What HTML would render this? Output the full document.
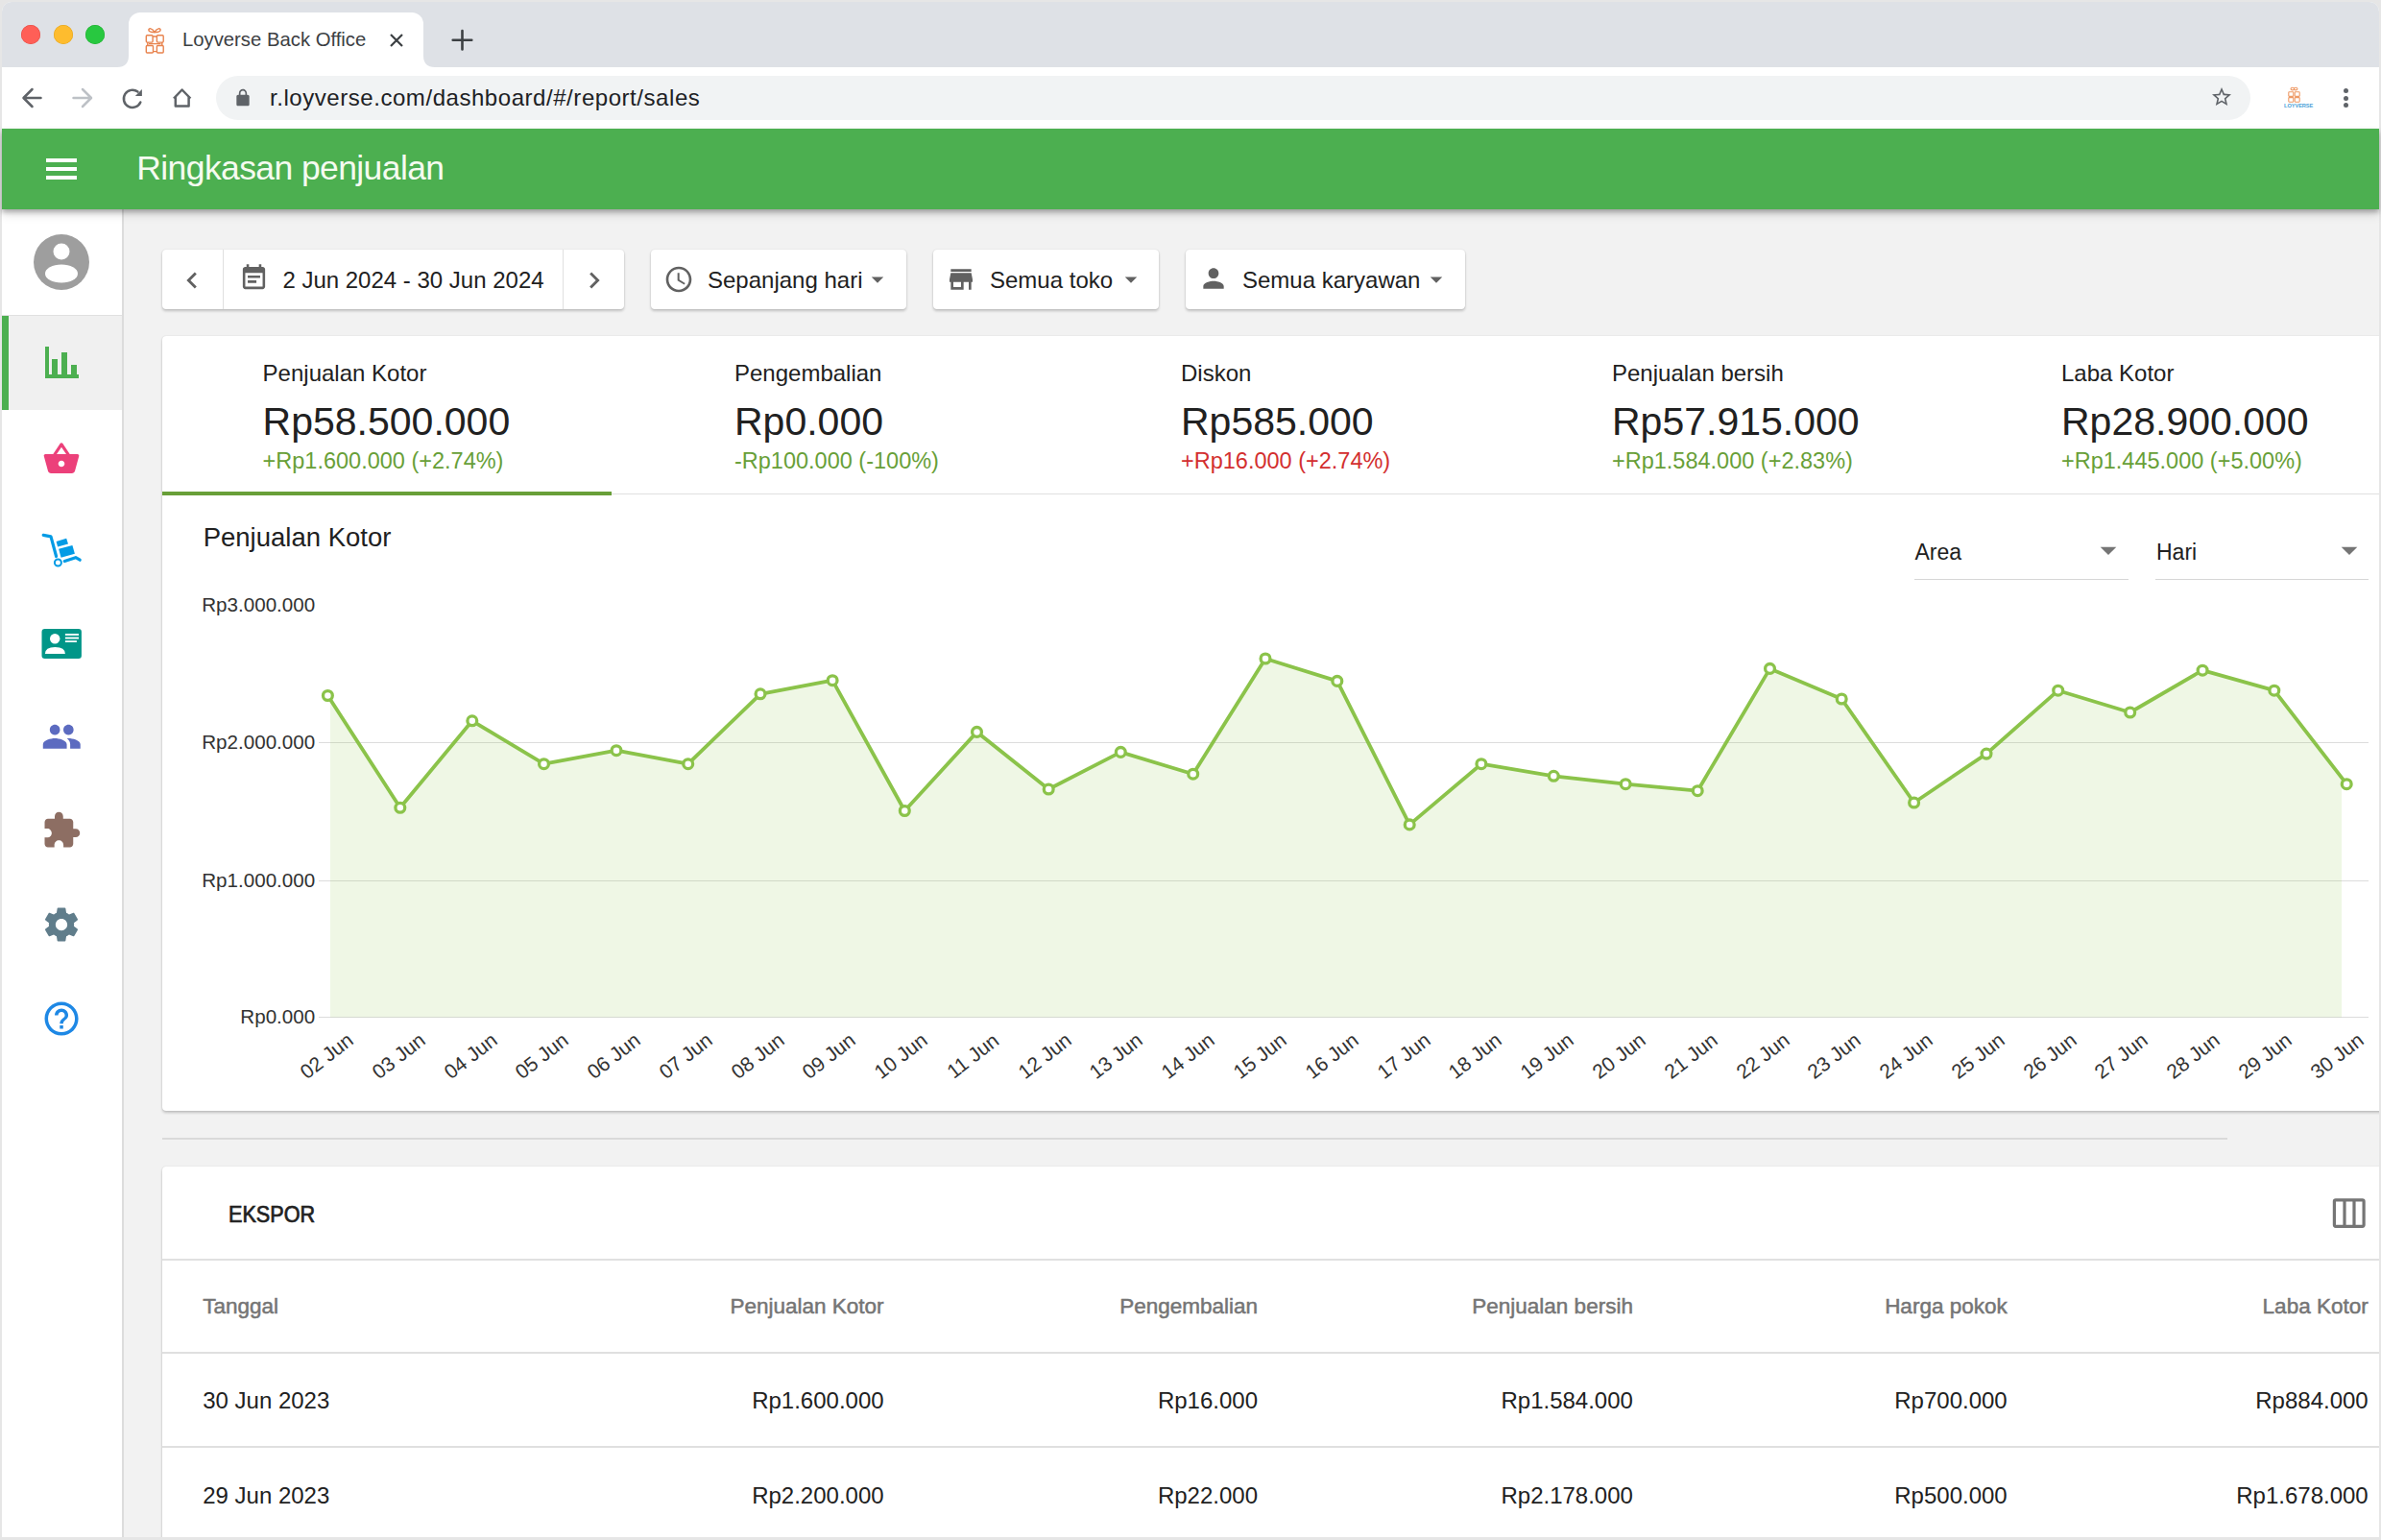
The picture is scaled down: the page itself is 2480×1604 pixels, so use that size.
<!DOCTYPE html>
<html><head><meta charset="utf-8"><title>Loyverse Back Office</title>
<style>
html,body{margin:0;padding:0;}
body{width:2480px;height:1604px;overflow:hidden;position:relative;background:#e6e6e6;font-family:"Liberation Sans", sans-serif;}
.t{position:absolute;white-space:nowrap;font-family:"Liberation Sans", sans-serif;}
</style></head><body>
<div style="position:absolute;left:0px;top:0px;width:2480px;height:1604px;background:#e6e6e6"></div>
<div style="position:absolute;left:2px;top:2px;width:2476px;height:1599px;background:#fff;border-radius:10px;overflow:hidden"></div>
<div style="position:absolute;left:2px;top:2px;width:2476px;height:68px;background:#dee1e6;border-radius:10px 10px 0 0"></div>
<div style="position:absolute;left:22px;top:26px;width:20px;height:20px;background:#ff5f57;border-radius:50%;box-shadow:inset 0 0 0 0.5px #e2463f"></div>
<div style="position:absolute;left:55.5px;top:26px;width:20px;height:20px;background:#febc2e;border-radius:50%;box-shadow:inset 0 0 0 0.5px #e1a116"></div>
<div style="position:absolute;left:89px;top:26px;width:20px;height:20px;background:#28c840;border-radius:50%;box-shadow:inset 0 0 0 0.5px #1aab29"></div>
<div style="position:absolute;left:134px;top:13px;width:307px;height:57px;background:#fff;border-radius:12px 12px 0 0"></div>
<svg style="position:absolute;left:122px;top:58px" width="12" height="12"><path d="M0 12 Q12 12 12 0 L12 12 Z" fill="#fff"/></svg>
<svg style="position:absolute;left:441px;top:58px" width="12" height="12"><path d="M12 12 Q0 12 0 0 L0 12 Z" fill="#fff"/></svg>
<svg style="position:absolute;left:145px;top:25px;" width="32" height="34" viewBox="0 0 32 34"><g fill="none" stroke="#e8834e" stroke-width="1.4"><path d="M16 8.6 C13.5 4.2 9.6 3.9 9.9 6.4 C10.1 8.2 12.8 8.6 16 8.6 C19.2 8.6 21.9 8.2 22.1 6.4 C22.4 3.9 18.5 4.2 16 8.6 Z"/><rect x="7.3" y="11.7" width="6.8" height="7.4" rx="1"/><rect x="18.4" y="11.7" width="6.8" height="7.4" rx="1"/><rect x="7.3" y="22.5" width="7.2" height="7.5" rx="1"/><rect x="18.4" y="22.5" width="6.8" height="7.5" rx="1"/><path d="M14.1 13 H18.4 M14.5 28.6 H18.4 M8.8 19 V22.5 M23.8 19 V22.5 M10 20.6 H22.5"/></g></svg>
<div class="t" style="left:190px;top:31.2px;font-size:20.3px;line-height:20.3px;color:#3c4043;font-weight:400;">Loyverse Back Office</div>
<svg style="position:absolute;left:404px;top:33px;" width="18" height="18" viewBox="0 0 18 18"><path d="M3 3 L15 15 M15 3 L3 15" stroke="#3c4043" stroke-width="2.2"/></svg>
<svg style="position:absolute;left:465px;top:26px" width="32" height="32" viewBox="465 26 32 32"><path d="M481.5 32 V51.5 M471.7 41.8 H491.3" stroke="#3c4043" stroke-width="2.6" stroke-linecap="round"/></svg>
<svg style="position:absolute;left:0;top:70px" width="220" height="64" viewBox="0 70 220 64"><g fill="none" stroke-linecap="round" stroke-linejoin="round" stroke-width="2.5"><path stroke="#5f6368" d="M42.5 102 H25 M33.5 93 L24.5 102 L33.5 111"/><path stroke="#bdc1c6" d="M76.5 102 H94.5 M86 93 L95 102 L86 111"/><path stroke="#5f6368" d="M146.3 106.5 A9.1 9.1 0 1 1 143.5 95.6"/><path stroke="#5f6368" stroke-linecap="butt" d="M181 102.5 L189.6 93.5 L198.4 102.5 M182.8 100.5 V110.6 H196.6 V100.5"/></g><path fill="#5f6368" d="M147.9 93 V100 H140.9 Z"/></svg>
<div style="position:absolute;left:225px;top:79px;width:2119px;height:46px;background:#f1f3f4;border-radius:23px"></div>
<svg style="position:absolute;left:243.2px;top:92.4px;" width="20" height="20" viewBox="0 0 24 24"><path fill="#5f6368" d="M18 8h-1V6c0-2.76-2.24-5-5-5S7 3.24 7 6v2H6c-1.1 0-2 .9-2 2v10c0 1.1.9 2 2 2h12c1.1 0 2-.9 2-2V10c0-1.1-.9-2-2-2zM9 6c0-1.66 1.34-3 3-3s3 1.34 3 3v2H9V6z"/></svg>
<div class="t" style="left:281px;top:90.4px;font-size:24px;line-height:24px;color:#202124;font-weight:400;letter-spacing:0.55px">r.loyverse.com/dashboard/#/report/sales</div>
<svg style="position:absolute;left:2302px;top:89px;" width="24" height="24" viewBox="0 0 24 24"><path fill="#5f6368" d="M22 9.24l-7.19-.62L12 2 9.19 8.63 2 9.24l5.46 4.73L5.82 21 12 17.27 18.18 21l-1.63-7.03L22 9.24zM12 15.4l-3.76 2.27 1-4.28-3.32-2.88 4.38-.38L12 6.1l1.71 4.04 4.38.38-3.32 2.88 1 4.28L12 15.4z"/></svg>
<svg style="position:absolute;left:2382px;top:89.5px;" width="15" height="17" viewBox="0 0 15 17"><g fill="none" stroke="#ee9a66" stroke-width="1.1"><ellipse cx="5.8" cy="2.6" rx="1.8" ry="1.3"/><ellipse cx="9.2" cy="2.6" rx="1.8" ry="1.3"/><rect x="1.8" y="5.8" width="5" height="4.6" rx=".6"/><rect x="8.2" y="5.8" width="5" height="4.6" rx=".6"/><rect x="1.8" y="11.6" width="5" height="4.6" rx=".6"/><rect x="8.2" y="11.6" width="5" height="4.6" rx=".6"/></g></svg>
<div class="t" style="left:2378.5px;top:107.3px;font-size:6px;line-height:6px;font-weight:700;color:#4a9fd8;letter-spacing:-0.1px;transform:scaleX(0.95);transform-origin:left">LOYVERSE</div>
<div style="position:absolute;left:2440.5px;top:92.0px;width:5px;height:5px;background:#5f6368;border-radius:50%"></div>
<div style="position:absolute;left:2440.5px;top:99.5px;width:5px;height:5px;background:#5f6368;border-radius:50%"></div>
<div style="position:absolute;left:2440.5px;top:107.1px;width:5px;height:5px;background:#5f6368;border-radius:50%"></div>
<div style="position:absolute;left:2px;top:134px;width:2476px;height:84px;background:#4caf50;box-shadow:0 3px 5px rgba(0,0,0,.28),0 6px 10px rgba(0,0,0,.1);z-index:2"></div>
<div style="position:absolute;left:48px;top:165px;width:32px;height:4.2px;background:#fff;z-index:3"></div>
<div style="position:absolute;left:48px;top:173.7px;width:32px;height:4.2px;background:#fff;z-index:3"></div>
<div style="position:absolute;left:48px;top:182.5px;width:32px;height:4.2px;background:#fff;z-index:3"></div>
<div class="t" style="left:142.3px;top:158.2px;font-size:35.5px;line-height:35.5px;color:#f5fbf0;font-weight:400;z-index:3;letter-spacing:-0.6px">Ringkasan penjualan</div>
<div style="position:absolute;left:2px;top:218px;width:125px;height:1384px;background:#fff;border-right:2px solid #dcdcdc"></div>
<div style="position:absolute;left:129px;top:218px;width:2349px;height:1383px;background:#f2f2f2"></div>
<svg style="position:absolute;left:35px;top:244px;" width="58" height="58" viewBox="0 0 58 58"><circle cx="29" cy="29" r="29" fill="#9e9e9e"/><circle cx="29" cy="18" r="8.5" fill="#fff"/><ellipse cx="29" cy="41" rx="17" ry="9.5" fill="#fff"/></svg>
<div style="position:absolute;left:2px;top:327.5px;width:125px;height:1.5px;background:#e0e0e0"></div>
<div style="position:absolute;left:2px;top:329px;width:125px;height:98px;background:#f0f0f0"></div>
<div style="position:absolute;left:2px;top:329px;width:6.5px;height:98px;background:#4caf50"></div>
<svg style="position:absolute;left:46px;top:361px;" width="36" height="34" viewBox="0 0 36 34"><g fill="#4caf50"><rect x="1" y="0" width="4" height="33"/><rect x="1" y="29" width="35" height="4"/><rect x="8" y="13" width="6" height="18"/><rect x="18" y="6" width="6" height="25"/><rect x="28" y="19" width="6" height="12"/></g></svg>
<svg style="position:absolute;left:44px;top:457.5px;" width="40" height="40" viewBox="0 0 24 24"><path fill="#ec407a" d="M17.21 9l-4.38-6.56c-.19-.28-.51-.42-.83-.42-.32 0-.64.14-.83.43L6.79 9H2c-.55 0-1 .45-1 1 0 .09.01.18.04.27l2.54 9.27c.23.84 1 1.46 1.92 1.46h13c.92 0 1.69-.62 1.93-1.46l2.54-9.27L23 10c0-.55-.45-1-1-1h-4.79zM9 9l3-4.4L15 9H9zm3 8c-1.1 0-2-.9-2-2s.9-2 2-2 2 .9 2 2-.9 2-2 2z"/></svg>
<svg style="position:absolute;left:38px;top:548px;" width="52" height="48" viewBox="0 0 52 48"><g fill="#039be5"><path d="M7.2 9.4 L15 10.9 L20.6 31.5" fill="none" stroke="#039be5" stroke-width="3.2" stroke-linecap="round" stroke-linejoin="round"/><polygon points="20.6,15.9 31.2,12.8 33,18.4 22.1,21.5"/><polygon points="23.1,23.7 37.4,20 39.9,28.7 25.6,32.7"/><circle cx="22.4" cy="38" r="3.5" fill="none" stroke="#039be5" stroke-width="2"/><path d="M29.3 36.5 L40.8 32.7 L45.2 35.2" fill="none" stroke="#039be5" stroke-width="3.2" stroke-linecap="round" stroke-linejoin="round"/></g></svg>
<svg style="position:absolute;left:38px;top:648px;" width="52" height="48" viewBox="0 0 52 48"><rect x="5.5" y="6.9" width="41.4" height="31" rx="3.2" fill="#009688"/><circle cx="19.2" cy="17.3" r="5.2" fill="#fff"/><path d="M8.9 33 Q8.9 25.9 19.4 25.9 Q29.9 25.9 29.9 33 Z" fill="#fff"/><rect x="29.9" y="12" width="14.1" height="1.9" fill="#fff"/><rect x="29.9" y="15.6" width="14.1" height="1.9" fill="#fff"/><rect x="29.9" y="19.2" width="12" height="1.8" fill="#fff"/></svg>
<svg style="position:absolute;left:42.9px;top:746.1px;" width="42.5" height="42.5" viewBox="0 0 24 24"><path fill="#5c6bc0" d="M16 11c1.66 0 2.99-1.34 2.99-3S17.66 5 16 5c-1.66 0-3 1.34-3 3s1.34 3 3 3zm-8 0c1.66 0 2.99-1.34 2.99-3S9.66 5 8 5C6.34 5 5 6.34 5 8s1.34 3 3 3zm0 2c-2.33 0-7 1.17-7 3.5V19h14v-2.5c0-2.33-4.67-3.5-7-3.5zm8 0c-.29 0-.62.02-.97.05 1.16.84 1.97 1.97 1.97 3.45V19h6v-2.5c0-2.33-4.67-3.5-7-3.5z"/></svg>
<svg style="position:absolute;left:43px;top:844px;" width="42" height="42" viewBox="0 0 24 24"><path fill="#8d6e63" d="M20.5 11H19V7c0-1.1-.9-2-2-2h-4V3.5C13 2.12 11.88 1 10.5 1S8 2.12 8 3.5V5H4c-1.1 0-1.99.9-1.99 2v3.8H3.5c1.49 0 2.7 1.21 2.7 2.7s-1.21 2.7-2.7 2.7H2V20c0 1.1.9 2 2 2h3.8v-1.5c0-1.49 1.21-2.7 2.7-2.7 1.49 0 2.7 1.21 2.7 2.7V22H17c1.1 0 2-.9 2-2v-4h1.5c1.38 0 2.5-1.12 2.5-2.5S21.88 11 20.5 11z"/></svg>
<svg style="position:absolute;left:43px;top:942px;" width="42" height="42" viewBox="0 0 24 24"><path fill="#607d8b" d="M19.43 12.98c.04-.32.07-.64.07-.98s-.03-.66-.07-.98l2.11-1.65c.19-.15.24-.42.12-.64l-2-3.46c-.12-.22-.39-.3-.61-.22l-2.49 1c-.52-.4-1.08-.73-1.69-.98l-.38-2.65C14.46 2.18 14.25 2 14 2h-4c-.25 0-.46.18-.49.42l-.38 2.650c-.61.25-1.17.59-1.69.98l-2.49-1c-.23-.09-.49 0-.61.22l-2 3.46c-.13.22-.07.49.12.64l2.11 1.65c-.04.32-.07.65-.07.98s.03.66.07.98l-2.11 1.65c-.19.15-.24.42-.12.64l2 3.46c.12.22.39.3.61.22l2.49-1c.52.4 1.08.73 1.69.98l.38 2.65c.03.24.24.42.49.42h4c.25 0 .46-.18.49-.42l.38-2.65c.61-.25 1.17-.59 1.69-.98l2.49 1c.23.09.49 0 .61-.22l2-3.46c.12-.22.07-.49-.12-.64l-2.11-1.65zM12 15.5c-1.93 0-3.5-1.57-3.5-3.5s1.57-3.5 3.5-3.5 3.5 1.57 3.5 3.5-1.57 3.5-3.5 3.5z"/></svg>
<svg style="position:absolute;left:43.3px;top:1039.5px;" width="42.1" height="42.1" viewBox="0 0 24 24"><path fill="#1e88e5" d="M11 18h2v-2h-2v2zm1-16C6.48 2 2 6.48 2 12s4.48 10 10 10 10-4.48 10-10S17.52 2 12 2zm0 18c-4.41 0-8-3.59-8-8s3.59-8 8-8 8 3.59 8 8-3.59 8-8 8zm0-14c-2.21 0-4 1.79-4 4h2c0-1.1.9-2 2-2s2 .9 2 2c0 2-3 1.75-3 5h2c0-2.25 3-2.5 3-5 0-2.21-1.79-4-4-4z"/></svg>
<div style="position:absolute;left:168.5px;top:259.5px;width:481px;height:62.3px;background:#fff;border-radius:4px;box-shadow:0 2px 3px rgba(0,0,0,.2),0 0 1.5px rgba(0,0,0,.14)"></div>
<div style="position:absolute;left:231.5px;top:259.5px;width:1.5px;height:62.3px;background:#e0e0e0"></div>
<div style="position:absolute;left:585.5px;top:259.5px;width:1.5px;height:62.3px;background:#e0e0e0"></div>
<svg style="position:absolute;left:183px;top:275px;" width="34" height="34" viewBox="0 0 24 24"><path fill="#616161" d="M15.41 7.41L14 6l-6 6 6 6 1.41-1.41L10.83 12z"/></svg>
<svg style="position:absolute;left:602px;top:275px;" width="34" height="34" viewBox="0 0 24 24"><path fill="#616161" d="M10 6L8.59 7.41 13.17 12l-4.58 4.59L10 18l6-6z"/></svg>
<svg style="position:absolute;left:249px;top:274px;" width="31" height="31" viewBox="0 0 24 24"><path fill="#616161" d="M17 10H7v2h10v-2zm2-7h-1V1h-2v2H8V1H6v2H5c-1.11 0-1.99.9-1.99 2L3 19c0 1.1.89 2 2 2h14c1.1 0 2-.9 2-2V5c0-1.1-.9-2-2-2zm0 16H5V8h14v11zm-5-5H7v2h7v-2z"/></svg>
<div class="t" style="left:294.4px;top:279.8px;font-size:24px;line-height:24px;color:#212121;font-weight:400;">2 Jun 2024 - 30 Jun 2024</div>
<div style="position:absolute;left:677.5px;top:259.5px;width:266.5px;height:62.3px;background:#fff;border-radius:4px;box-shadow:0 2px 3px rgba(0,0,0,.2),0 0 1.5px rgba(0,0,0,.14)"></div>
<svg style="position:absolute;left:691px;top:275px;" width="32" height="32" viewBox="0 0 24 24"><path fill="#616161" d="M11.99 2C6.47 2 2 6.48 2 12s4.47 10 9.99 10C17.52 22 22 17.52 22 12S17.52 2 11.99 2zM12 20c-4.42 0-8-3.58-8-8s3.58-8 8-8 8 3.58 8 8-3.58 8-8 8zm.5-13H11v6l5.25 3.15.75-1.23-4.5-2.67z"/></svg>
<div class="t" style="left:737px;top:279.8px;font-size:24px;line-height:24px;color:#212121;font-weight:400;">Sepanjang hari</div>
<svg style="position:absolute;left:899px;top:275.9px;" width="30" height="30" viewBox="0 0 24 24"><path fill="#616161" d="M7 10l5 5 5-5z"/></svg>
<div style="position:absolute;left:971.5px;top:259.5px;width:235.5px;height:62.3px;background:#fff;border-radius:4px;box-shadow:0 2px 3px rgba(0,0,0,.2),0 0 1.5px rgba(0,0,0,.14)"></div>
<svg style="position:absolute;left:985px;top:275px;" width="32" height="32" viewBox="0 0 24 24"><path fill="#616161" d="M20 4H4v2h16V4zm1 10v-2l-1-5H4l-1 5v2h1v6h10v-6h4v6h2v-6h1zm-9 4H6v-4h6v4z"/></svg>
<div class="t" style="left:1031px;top:279.8px;font-size:24px;line-height:24px;color:#212121;font-weight:400;">Semua toko</div>
<svg style="position:absolute;left:1162.5px;top:275.9px;" width="30" height="30" viewBox="0 0 24 24"><path fill="#616161" d="M7 10l5 5 5-5z"/></svg>
<div style="position:absolute;left:1235px;top:259.5px;width:291px;height:62.3px;background:#fff;border-radius:4px;box-shadow:0 2px 3px rgba(0,0,0,.2),0 0 1.5px rgba(0,0,0,.14)"></div>
<svg style="position:absolute;left:1248px;top:274px;" width="32" height="32" viewBox="0 0 24 24"><path fill="#616161" d="M12 12c2.21 0 4-1.79 4-4s-1.79-4-4-4-4 1.79-4 4 1.79 4 4 4zm0 2c-2.67 0-8 1.34-8 4v2h16v-2c0-2.66-5.33-4-8-4z"/></svg>
<div class="t" style="left:1294px;top:279.8px;font-size:24px;line-height:24px;color:#212121;font-weight:400;">Semua karyawan</div>
<svg style="position:absolute;left:1480.5px;top:275.9px;" width="30" height="30" viewBox="0 0 24 24"><path fill="#616161" d="M7 10l5 5 5-5z"/></svg>
<div style="position:absolute;left:168.5px;top:349.6px;width:2340px;height:807.6px;background:#fff;border-radius:4px;box-shadow:0 2px 3px rgba(0,0,0,.2),0 0 1.5px rgba(0,0,0,.14)"></div>
<div class="t" style="left:273.6px;top:376.6px;font-size:24px;line-height:24px;color:#212121;font-weight:400;">Penjualan Kotor</div>
<div class="t" style="left:273.6px;top:418.9px;font-size:41px;line-height:41px;color:#212121;font-weight:400;">Rp58.500.000</div>
<div class="t" style="left:273.6px;top:469.2px;font-size:23.5px;line-height:23.5px;color:#689f38;font-weight:400;">+Rp1.600.000 (+2.74%)</div>
<div class="t" style="left:765px;top:376.6px;font-size:24px;line-height:24px;color:#212121;font-weight:400;">Pengembalian</div>
<div class="t" style="left:765px;top:418.9px;font-size:41px;line-height:41px;color:#212121;font-weight:400;">Rp0.000</div>
<div class="t" style="left:765px;top:469.2px;font-size:23.5px;line-height:23.5px;color:#689f38;font-weight:400;">-Rp100.000 (-100%)</div>
<div class="t" style="left:1230px;top:376.6px;font-size:24px;line-height:24px;color:#212121;font-weight:400;">Diskon</div>
<div class="t" style="left:1230px;top:418.9px;font-size:41px;line-height:41px;color:#212121;font-weight:400;">Rp585.000</div>
<div class="t" style="left:1230px;top:469.2px;font-size:23.5px;line-height:23.5px;color:#d32f2f;font-weight:400;">+Rp16.000 (+2.74%)</div>
<div class="t" style="left:1679px;top:376.6px;font-size:24px;line-height:24px;color:#212121;font-weight:400;">Penjualan bersih</div>
<div class="t" style="left:1679px;top:418.9px;font-size:41px;line-height:41px;color:#212121;font-weight:400;">Rp57.915.000</div>
<div class="t" style="left:1679px;top:469.2px;font-size:23.5px;line-height:23.5px;color:#689f38;font-weight:400;">+Rp1.584.000 (+2.83%)</div>
<div class="t" style="left:2147px;top:376.6px;font-size:24px;line-height:24px;color:#212121;font-weight:400;">Laba Kotor</div>
<div class="t" style="left:2147px;top:418.9px;font-size:41px;line-height:41px;color:#212121;font-weight:400;">Rp28.900.000</div>
<div class="t" style="left:2147px;top:469.2px;font-size:23.5px;line-height:23.5px;color:#689f38;font-weight:400;">+Rp1.445.000 (+5.00%)</div>
<div style="position:absolute;left:168.5px;top:513.5px;width:2340px;height:1.5px;background:#e0e0e0"></div>
<div style="position:absolute;left:168.5px;top:511.5px;width:468.5px;height:4px;background:#689f38"></div>
<div class="t" style="left:211.7px;top:545.7px;font-size:27.5px;line-height:27.5px;color:#212121;font-weight:400;">Penjualan Kotor</div>
<div class="t" style="left:1994.5px;top:563.5px;font-size:23px;line-height:23px;color:#212121;font-weight:400;">Area</div>
<div style="position:absolute;left:1994px;top:602.5px;width:223px;height:1.5px;background:#d6d6d6"></div>
<svg style="position:absolute;left:2176.3px;top:552.9px;" width="40" height="40" viewBox="0 0 24 24"><path fill="#757575" d="M7 10l5 5 5-5z"/></svg>
<div class="t" style="left:2246px;top:563.5px;font-size:23px;line-height:23px;color:#212121;font-weight:400;">Hari</div>
<div style="position:absolute;left:2245px;top:602.5px;width:222px;height:1.5px;background:#d6d6d6"></div>
<svg style="position:absolute;left:2426.8px;top:552.9px;" width="40" height="40" viewBox="0 0 24 24"><path fill="#757575" d="M7 10l5 5 5-5z"/></svg>
<div class="t" style="right:2151.8px;top:620.4px;font-size:20.6px;line-height:20.6px;color:#333;font-weight:400;">Rp3.000.000</div>
<div class="t" style="right:2151.8px;top:763.4px;font-size:20.6px;line-height:20.6px;color:#333;font-weight:400;">Rp2.000.000</div>
<div class="t" style="right:2151.8px;top:907.2px;font-size:20.6px;line-height:20.6px;color:#333;font-weight:400;">Rp1.000.000</div>
<div class="t" style="right:2151.8px;top:1049.3px;font-size:20.6px;line-height:20.6px;color:#333;font-weight:400;">Rp0.000</div>
<div style="position:absolute;left:332px;top:772.85px;width:2135px;height:1.5px;background:#dcdcdc"></div>
<div style="position:absolute;left:332px;top:916.65px;width:2135px;height:1.5px;background:#dcdcdc"></div>
<div style="position:absolute;left:332px;top:1058.75px;width:2135px;height:1.5px;background:#dcdcdc"></div>
<svg style="position:absolute;left:0;top:0" width="2480" height="1604" viewBox="0 0 2480 1604"><polygon fill="#8bc34a" fill-opacity="0.14" points="344.0,1059.5 344.0,728.5 416.8,841.3 491.8,750.8 566.5,795.7 642.0,781.7 716.7,795.7 792.0,722.8 867.1,708.7 942.3,844.5 1017.5,762.4 1092.2,822.0 1167.3,783.4 1242.7,806.2 1318.0,686.0 1392.8,709.4 1468.2,858.9 1542.9,795.7 1618.3,808.3 1693.2,816.7 1768.2,823.7 1843.5,696.4 1918.2,728.0 1993.6,836.0 2069.0,785.1 2143.7,719.2 2218.7,742.0 2294.1,698.2 2368.8,719.2 2439.0,810.0 2439.0,1059.5"/><polyline fill="none" stroke="#8bc34a" stroke-width="3.8" stroke-linejoin="round" points="341.4,724.5 416.8,841.3 491.8,750.8 566.5,795.7 642.0,781.7 716.7,795.7 792.0,722.8 867.1,708.7 942.3,844.5 1017.5,762.4 1092.2,822.0 1167.3,783.4 1242.7,806.2 1318.0,686.0 1392.8,709.4 1468.2,858.9 1542.9,795.7 1618.3,808.3 1693.2,816.7 1768.2,823.7 1843.5,696.4 1918.2,728.0 1993.6,836.0 2069.0,785.1 2143.7,719.2 2218.7,742.0 2294.1,698.2 2368.8,719.2 2444.2,816.7"/><circle cx="341.4" cy="724.5" r="4.9" fill="#fff" stroke="#8bc34a" stroke-width="3.3"/><circle cx="416.8" cy="841.3" r="4.9" fill="#fff" stroke="#8bc34a" stroke-width="3.3"/><circle cx="491.8" cy="750.8" r="4.9" fill="#fff" stroke="#8bc34a" stroke-width="3.3"/><circle cx="566.5" cy="795.7" r="4.9" fill="#fff" stroke="#8bc34a" stroke-width="3.3"/><circle cx="642.0" cy="781.7" r="4.9" fill="#fff" stroke="#8bc34a" stroke-width="3.3"/><circle cx="716.7" cy="795.7" r="4.9" fill="#fff" stroke="#8bc34a" stroke-width="3.3"/><circle cx="792.0" cy="722.8" r="4.9" fill="#fff" stroke="#8bc34a" stroke-width="3.3"/><circle cx="867.1" cy="708.7" r="4.9" fill="#fff" stroke="#8bc34a" stroke-width="3.3"/><circle cx="942.3" cy="844.5" r="4.9" fill="#fff" stroke="#8bc34a" stroke-width="3.3"/><circle cx="1017.5" cy="762.4" r="4.9" fill="#fff" stroke="#8bc34a" stroke-width="3.3"/><circle cx="1092.2" cy="822.0" r="4.9" fill="#fff" stroke="#8bc34a" stroke-width="3.3"/><circle cx="1167.3" cy="783.4" r="4.9" fill="#fff" stroke="#8bc34a" stroke-width="3.3"/><circle cx="1242.7" cy="806.2" r="4.9" fill="#fff" stroke="#8bc34a" stroke-width="3.3"/><circle cx="1318.0" cy="686.0" r="4.9" fill="#fff" stroke="#8bc34a" stroke-width="3.3"/><circle cx="1392.8" cy="709.4" r="4.9" fill="#fff" stroke="#8bc34a" stroke-width="3.3"/><circle cx="1468.2" cy="858.9" r="4.9" fill="#fff" stroke="#8bc34a" stroke-width="3.3"/><circle cx="1542.9" cy="795.7" r="4.9" fill="#fff" stroke="#8bc34a" stroke-width="3.3"/><circle cx="1618.3" cy="808.3" r="4.9" fill="#fff" stroke="#8bc34a" stroke-width="3.3"/><circle cx="1693.2" cy="816.7" r="4.9" fill="#fff" stroke="#8bc34a" stroke-width="3.3"/><circle cx="1768.2" cy="823.7" r="4.9" fill="#fff" stroke="#8bc34a" stroke-width="3.3"/><circle cx="1843.5" cy="696.4" r="4.9" fill="#fff" stroke="#8bc34a" stroke-width="3.3"/><circle cx="1918.2" cy="728.0" r="4.9" fill="#fff" stroke="#8bc34a" stroke-width="3.3"/><circle cx="1993.6" cy="836.0" r="4.9" fill="#fff" stroke="#8bc34a" stroke-width="3.3"/><circle cx="2069.0" cy="785.1" r="4.9" fill="#fff" stroke="#8bc34a" stroke-width="3.3"/><circle cx="2143.7" cy="719.2" r="4.9" fill="#fff" stroke="#8bc34a" stroke-width="3.3"/><circle cx="2218.7" cy="742.0" r="4.9" fill="#fff" stroke="#8bc34a" stroke-width="3.3"/><circle cx="2294.1" cy="698.2" r="4.9" fill="#fff" stroke="#8bc34a" stroke-width="3.3"/><circle cx="2368.8" cy="719.2" r="4.9" fill="#fff" stroke="#8bc34a" stroke-width="3.3"/><circle cx="2444.2" cy="816.7" r="4.9" fill="#fff" stroke="#8bc34a" stroke-width="3.3"/></svg>
<div class="t" style="left:299.8px;top:1088.5px;width:80px;text-align:center;font-size:21px;line-height:21px;color:#333;transform:rotate(-38deg)">02 Jun</div>
<div class="t" style="left:374.9px;top:1088.5px;width:80px;text-align:center;font-size:21px;line-height:21px;color:#333;transform:rotate(-38deg)">03 Jun</div>
<div class="t" style="left:449.6px;top:1088.5px;width:80px;text-align:center;font-size:21px;line-height:21px;color:#333;transform:rotate(-38deg)">04 Jun</div>
<div class="t" style="left:524.0px;top:1088.5px;width:80px;text-align:center;font-size:21px;line-height:21px;color:#333;transform:rotate(-38deg)">05 Jun</div>
<div class="t" style="left:599.2px;top:1088.5px;width:80px;text-align:center;font-size:21px;line-height:21px;color:#333;transform:rotate(-38deg)">06 Jun</div>
<div class="t" style="left:673.6px;top:1088.5px;width:80px;text-align:center;font-size:21px;line-height:21px;color:#333;transform:rotate(-38deg)">07 Jun</div>
<div class="t" style="left:748.5px;top:1088.5px;width:80px;text-align:center;font-size:21px;line-height:21px;color:#333;transform:rotate(-38deg)">08 Jun</div>
<div class="t" style="left:823.3px;top:1088.5px;width:80px;text-align:center;font-size:21px;line-height:21px;color:#333;transform:rotate(-38deg)">09 Jun</div>
<div class="t" style="left:898.2px;top:1088.5px;width:80px;text-align:center;font-size:21px;line-height:21px;color:#333;transform:rotate(-38deg)">10 Jun</div>
<div class="t" style="left:973.1px;top:1088.5px;width:80px;text-align:center;font-size:21px;line-height:21px;color:#333;transform:rotate(-38deg)">11 Jun</div>
<div class="t" style="left:1047.5px;top:1088.5px;width:80px;text-align:center;font-size:21px;line-height:21px;color:#333;transform:rotate(-38deg)">12 Jun</div>
<div class="t" style="left:1122.3px;top:1088.5px;width:80px;text-align:center;font-size:21px;line-height:21px;color:#333;transform:rotate(-38deg)">13 Jun</div>
<div class="t" style="left:1197.4px;top:1088.5px;width:80px;text-align:center;font-size:21px;line-height:21px;color:#333;transform:rotate(-38deg)">14 Jun</div>
<div class="t" style="left:1272.4px;top:1088.5px;width:80px;text-align:center;font-size:21px;line-height:21px;color:#333;transform:rotate(-38deg)">15 Jun</div>
<div class="t" style="left:1346.9px;top:1088.5px;width:80px;text-align:center;font-size:21px;line-height:21px;color:#333;transform:rotate(-38deg)">16 Jun</div>
<div class="t" style="left:1422.0px;top:1088.5px;width:80px;text-align:center;font-size:21px;line-height:21px;color:#333;transform:rotate(-38deg)">17 Jun</div>
<div class="t" style="left:1496.3px;top:1088.5px;width:80px;text-align:center;font-size:21px;line-height:21px;color:#333;transform:rotate(-38deg)">18 Jun</div>
<div class="t" style="left:1571.4px;top:1088.5px;width:80px;text-align:center;font-size:21px;line-height:21px;color:#333;transform:rotate(-38deg)">19 Jun</div>
<div class="t" style="left:1646.0px;top:1088.5px;width:80px;text-align:center;font-size:21px;line-height:21px;color:#333;transform:rotate(-38deg)">20 Jun</div>
<div class="t" style="left:1720.7px;top:1088.5px;width:80px;text-align:center;font-size:21px;line-height:21px;color:#333;transform:rotate(-38deg)">21 Jun</div>
<div class="t" style="left:1795.7px;top:1088.5px;width:80px;text-align:center;font-size:21px;line-height:21px;color:#333;transform:rotate(-38deg)">22 Jun</div>
<div class="t" style="left:1870.1px;top:1088.5px;width:80px;text-align:center;font-size:21px;line-height:21px;color:#333;transform:rotate(-38deg)">23 Jun</div>
<div class="t" style="left:1945.2px;top:1088.5px;width:80px;text-align:center;font-size:21px;line-height:21px;color:#333;transform:rotate(-38deg)">24 Jun</div>
<div class="t" style="left:2020.3px;top:1088.5px;width:80px;text-align:center;font-size:21px;line-height:21px;color:#333;transform:rotate(-38deg)">25 Jun</div>
<div class="t" style="left:2094.7px;top:1088.5px;width:80px;text-align:center;font-size:21px;line-height:21px;color:#333;transform:rotate(-38deg)">26 Jun</div>
<div class="t" style="left:2169.3px;top:1088.5px;width:80px;text-align:center;font-size:21px;line-height:21px;color:#333;transform:rotate(-38deg)">27 Jun</div>
<div class="t" style="left:2244.4px;top:1088.5px;width:80px;text-align:center;font-size:21px;line-height:21px;color:#333;transform:rotate(-38deg)">28 Jun</div>
<div class="t" style="left:2318.8px;top:1088.5px;width:80px;text-align:center;font-size:21px;line-height:21px;color:#333;transform:rotate(-38deg)">29 Jun</div>
<div class="t" style="left:2393.9px;top:1088.5px;width:80px;text-align:center;font-size:21px;line-height:21px;color:#333;transform:rotate(-38deg)">30 Jun</div>
<div style="position:absolute;left:169px;top:1185px;width:2151px;height:2px;background:#dadada"></div>
<div style="position:absolute;left:168.5px;top:1214.5px;width:2340px;height:500px;background:#fff;border-radius:4px;box-shadow:0 2px 3px rgba(0,0,0,.2),0 0 1.5px rgba(0,0,0,.14)"></div>
<div class="t" style="left:238.4px;top:1253.8px;font-size:23.5px;line-height:23.5px;color:#212121;font-weight:400;-webkit-text-stroke:0.7px #212121;transform:scaleX(0.92);transform-origin:left">EKSPOR</div>
<svg style="position:absolute;left:2426px;top:1245px" width="42" height="38" viewBox="2426 1245 42 38"><g fill="none" stroke="#757575" stroke-width="3.2"><rect x="2431.4" y="1249.8" width="30.7" height="27.5" rx="1.5"/><path d="M2442 1250 V1277 M2452 1250 V1277"/></g></svg>
<div style="position:absolute;left:168.5px;top:1310.5px;width:2340px;height:2px;background:#e0e0e0"></div>
<div class="t" style="left:211.2px;top:1350.4px;font-size:22.5px;line-height:22.5px;color:#757575;font-weight:400;-webkit-text-stroke:0.5px #757575">Tanggal</div>
<div class="t" style="right:1559.4px;top:1350.4px;font-size:22.5px;line-height:22.5px;color:#757575;font-weight:400;-webkit-text-stroke:0.5px #757575">Penjualan Kotor</div>
<div class="t" style="right:1170px;top:1350.4px;font-size:22.5px;line-height:22.5px;color:#757575;font-weight:400;-webkit-text-stroke:0.5px #757575">Pengembalian</div>
<div class="t" style="right:779.0999999999999px;top:1350.4px;font-size:22.5px;line-height:22.5px;color:#757575;font-weight:400;-webkit-text-stroke:0.5px #757575">Penjualan bersih</div>
<div class="t" style="right:389.3000000000002px;top:1350.4px;font-size:22.5px;line-height:22.5px;color:#757575;font-weight:400;-webkit-text-stroke:0.5px #757575">Harga pokok</div>
<div class="t" style="right:13.300000000000182px;top:1350.4px;font-size:22.5px;line-height:22.5px;color:#757575;font-weight:400;-webkit-text-stroke:0.5px #757575">Laba Kotor</div>
<div style="position:absolute;left:168.5px;top:1408px;width:2340px;height:2px;background:#e0e0e0"></div>
<div class="t" style="left:211.2px;top:1446.8px;font-size:24px;line-height:24px;color:#212121;font-weight:400;">30 Jun 2023</div>
<div class="t" style="right:1559.4px;top:1446.8px;font-size:24px;line-height:24px;color:#212121;font-weight:400;">Rp1.600.000</div>
<div class="t" style="right:1170px;top:1446.8px;font-size:24px;line-height:24px;color:#212121;font-weight:400;">Rp16.000</div>
<div class="t" style="right:779.0999999999999px;top:1446.8px;font-size:24px;line-height:24px;color:#212121;font-weight:400;">Rp1.584.000</div>
<div class="t" style="right:389.3000000000002px;top:1446.8px;font-size:24px;line-height:24px;color:#212121;font-weight:400;">Rp700.000</div>
<div class="t" style="right:13.300000000000182px;top:1446.8px;font-size:24px;line-height:24px;color:#212121;font-weight:400;">Rp884.000</div>
<div class="t" style="left:211.2px;top:1545.9px;font-size:24px;line-height:24px;color:#212121;font-weight:400;">29 Jun 2023</div>
<div class="t" style="right:1559.4px;top:1545.9px;font-size:24px;line-height:24px;color:#212121;font-weight:400;">Rp2.200.000</div>
<div class="t" style="right:1170px;top:1545.9px;font-size:24px;line-height:24px;color:#212121;font-weight:400;">Rp22.000</div>
<div class="t" style="right:779.0999999999999px;top:1545.9px;font-size:24px;line-height:24px;color:#212121;font-weight:400;">Rp2.178.000</div>
<div class="t" style="right:389.3000000000002px;top:1545.9px;font-size:24px;line-height:24px;color:#212121;font-weight:400;">Rp500.000</div>
<div class="t" style="right:13.300000000000182px;top:1545.9px;font-size:24px;line-height:24px;color:#212121;font-weight:400;">Rp1.678.000</div>
<div style="position:absolute;left:168.5px;top:1505.5px;width:2340px;height:2px;background:#e0e0e0"></div>
<div style="position:absolute;left:0px;top:1601px;width:2480px;height:3px;background:#e6e6e6"></div>
<div style="position:absolute;left:2478px;top:0px;width:2px;height:1604px;background:#e6e6e6"></div>
<div style="position:absolute;left:0px;top:0px;width:2px;height:1604px;background:#e6e6e6"></div>
</body></html>
